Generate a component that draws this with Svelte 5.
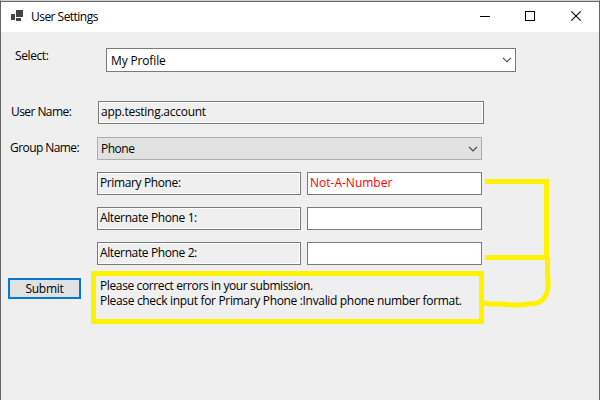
<script>
  const phones = [
    { label: 'Primary Phone:', value: 'Not-A-Number' },
    { label: 'Alternate Phone 1:', value: '' },
    { label: 'Alternate Phone 2:', value: '' }
  ];
</script>

<div class="window">
  <header>
    <svg class="logo" width="12" height="11" viewBox="0 0 12 11" fill="#444" shape-rendering="crispEdges">
      <path d="M0 4h4v6H0zM5 0h7v7H5zM5 8h5v3H5z" />
    </svg>
    <span class="title">User Settings</span>
    <svg class="controls" width="108" height="12" viewBox="0 0 108 12" fill="none" stroke="#000">
      <path d="M0 6.5h10M45.5 1.5h9v9h-9z" shape-rendering="crispEdges" />
      <path d="M91.3 1.3l9.4 9.4M100.7 1.3l-9.4 9.4" stroke-width="1.1" />
    </svg>
  </header>

  <main>
    <div class="row select">
      <label for="s">Select:</label>
      <div class="combo" id="s">
        <span class="profile">My Profile</span>
        <svg width="10" height="6" viewBox="0 0 10 6"><path d="M1 .8l4 4 4-4" fill="none" stroke="#444" stroke-width="1.1" /></svg>
      </div>
    </div>

    <div class="row user">
      <label for="u">User Name:</label>
      <div class="box readonly" id="u"><span class="account">app.testing.account</span></div>
    </div>

    <div class="row group">
      <label for="g">Group Name:</label>
      <div class="combo grey" id="g">
        <span>Phone</span>
        <svg width="10" height="6" viewBox="0 0 10 6"><path d="M1 .8l4 4 4-4" fill="none" stroke="#444" stroke-width="1.2" /></svg>
      </div>
    </div>

    {#each phones as phone}
      <div class="row phone">
        <div class="box readonly name"><span>{phone.label}</span></div>
        <div class="box value"><span>{phone.value}</span></div>
      </div>
    {/each}

    <div class="row result">
      <button>Submit</button>
      <div class="message">
        <p class="m1">Please correct errors in your submission.</p>
        <p class="m2">Please check input for Primary Phone :Invalid phone number format.</p>
      </div>
    </div>
  </main>

  <svg class="marks" width="600" height="400" viewBox="0 0 600 400" fill="none" stroke="#fff200" stroke-width="5">
    <path d="M485 181.5h61.5V258M485 257.5h62" shape-rendering="crispEdges" />
    <path d="M547.5 257V275L548 280V288Q546 302 534 303.6L520 305H512L501 304H490L483 303" />
  </svg>
</div>

<style>
  :global(body) { margin: 0; }
  .window {
    position: relative;
    box-sizing: border-box;
    width: 600px;
    height: 400px;
    overflow: hidden;
    background: #efefef;
    border: 1px solid #666;
    border-top-color: #d4d4d4;
    border-bottom: 0;
    color: #000;
    font: 12px/15px "Open Sans", "Noto Sans", sans-serif;
    letter-spacing: -0.38px;
  }
  header {
    box-sizing: border-box;
    display: flex;
    align-items: flex-start;
    height: 31px;
    padding: 8px 0 0 10px;
    border-top: 1px solid #666;
    background: #fff;
  }
  .logo { display: block; }
  .title { margin: -1px 0 0 8px; flex: 1; letter-spacing: -0.53px; }
  .controls { display: block; margin-right: 11px; }
  span, label, p { white-space: nowrap; }
  .row { display: flex; }
  label { flex: none; box-sizing: border-box; letter-spacing: -0.57px; }
  .select { padding-top: 16px; }
  .select label { width: 105px; padding-left: 14px; letter-spacing: -0.4px; }
  .profile { letter-spacing: -0.15px; }
  .account { letter-spacing: -0.27px; }
  .combo {
    box-sizing: border-box;
    display: flex;
    align-items: center;
    justify-content: space-between;
    width: 410px;
    height: 24px;
    padding: 0 3px 0 4px;
    border: 1px solid #7a7a7a;
    background: #fff;
  }
  .combo.grey {
    width: 385px;
    height: 23px;
    padding-left: 3px;
    border-color: #adadad;
    background: #e1e1e1;
    letter-spacing: -0.5px;
  }
  .user { margin-top: 29px; }
  .user label { width: 97px; padding: 3px 0 0 10px; }
  .box {
    box-sizing: border-box;
    height: 23px;
    padding: 2px 2px 0;
    border: 1px solid #7a7a7a;
    background: #fff;
  }
  .readonly { background: #efefef; box-shadow: inset 0 0 0 1px #fff; }
  .user .box { width: 386px; }
  .group { margin-top: 13px; }
  .group label { width: 96px; padding: 3px 0 0 9px; }
  .phone { margin: 12px 0 0 96px; gap: 6px; }
  .name { width: 204px; }
  .value { width: 175px; color: #f00; letter-spacing: 0; }
  .result { margin: 6px 0 0 7px; }
  button {
    box-sizing: border-box;
    width: 73px;
    height: 21px;
    margin: 7px 10px 0 0;
    padding: 0;
    border: 2px solid #0078d7;
    background: #e1e1e1;
    color: #000;
    font: inherit;
    letter-spacing: -0.25px;
  }
  .message {
    box-sizing: border-box;
    width: 393px;
    height: 53px;
    padding: 2px 4px;
    border: 5px solid #fff200;
  }
  p { margin: 0; }
  .m2 { letter-spacing: -0.33px; }
  .marks { position: absolute; left: -1px; top: -1px; }
</style>
